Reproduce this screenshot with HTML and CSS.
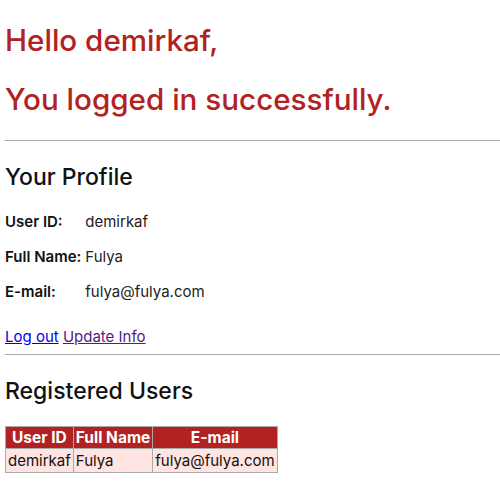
FILE: index.html
```html
<!DOCTYPE html>
<html>
<head>
<meta charset="utf-8">
<link rel="stylesheet" href="styles.css">
</head>
<body>
<h1 class="greet">Hello demirkaf,</h1>
<h1 class="greet">You logged in successfully.</h1>
<hr class="rule">
<h2 class="section">Your Profile</h2>
<div class="profile">
  <div class="label">User ID:</div><div class="value">demirkaf</div>
  <div class="label">Full Name:</div><div class="value">Fulya</div>
  <div class="label">E-mail:</div><div class="value">fulya@fulya.com</div>
</div>
<p class="links"><a class="link" href="#logout">Log out</a> <a class="link visited" href="#update">Update Info</a></p>
<hr class="rule rule-tight">
<h2 class="section">Registered Users</h2>
<table class="users">
  <thead>
    <tr><th>User ID</th><th>Full Name</th><th>E-mail</th></tr>
  </thead>
  <tbody>
    <tr><td>demirkaf</td><td>Fulya</td><td>fulya@fulya.com</td></tr>
  </tbody>
</table>
</body>
</html>
```
FILE: styles.css
```css
body {
  margin: 0 0 0 5px;
  font-family: Inter, "Open Sans", sans-serif;
  font-size: 15px;
  color: #111;
  background: #fff;
}
.greet {
  color: #b22222;
  font-size: 29.6px;
  font-weight: 500;
  line-height: 38px;
  margin: 21px 0;
}
.rule {
  border: 0;
  border-top: 1px solid #aaa;
  margin: 22px 0 0 0;
}
.rule-tight {
  margin-top: 0;
}
.section {
  font-size: 23px;
  font-weight: 500;
  margin: 21px 0 20px;
  line-height: 30px;
}
.profile {
  display: grid;
  grid-template-columns: max-content 1fr;
  column-gap: 4px;
  row-gap: 15px;
  line-height: 20px;
}
.label {
  font-weight: 600;
}
.value {
  color: #222;
}
.links {
  margin: 25px 0 7px 0;
  line-height: 20px;
}
.link {
  color: #0000ee;
}
.link.visited {
  color: #551a8b;
}
.users {
  border-collapse: collapse;
  margin-top: 17px;
}
.users th, .users td {
  border: 1px solid #aaa;
  padding: 1px 2px;
}
.users th {
  background: #b22222;
  color: #fff;
  font-weight: 700;
  font-size: 15.5px;
  line-height: 19px;
}
.users td {
  background: #ffe4e1;
  color: #111;
  line-height: 21px;
}
```
